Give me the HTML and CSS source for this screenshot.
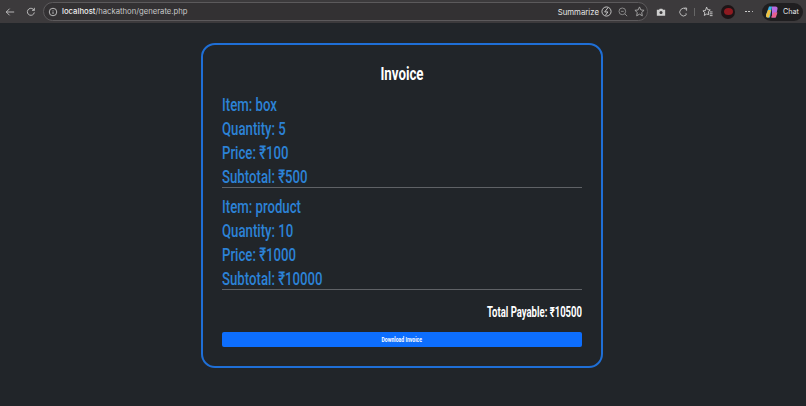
FILE: index.html
```html
<!DOCTYPE html>
<html lang="en">
<head>
<meta charset="utf-8">
<title>Invoice</title>
<link rel="stylesheet" href="styles.css">
</head>
<body>
<header class="chrome">
  <svg class="ic ic-back" viewBox="0 0 12 12"><path d="M11 6H1.500M5.500 2L1.500 6l4 4"/></svg>
  <svg class="ic ic-reload" viewBox="0 0 12 12"><path d="M10 6.500A4.200 4.200 0 1 1 8.600 2.600L10 4M10 1v3H7.200"/></svg>
  <div class="omnibox">
    <svg class="ic ic-info" viewBox="0 0 12 12"><circle cx="6" cy="6" r="4.500"/><path d="M6 5.400v3M6 3.600v.8"/></svg>
    <span class="url"><b>localhost</b>/hackathon/generate.php</span>
    <span class="summarize">Summarize</span>
    <svg class="ic ic-sum" viewBox="0 0 12 12"><circle cx="6" cy="6" r="5"/><path d="M7.500 2L4 6.500h3.500L5 10"/></svg>
    <svg class="ic ic-zoom" viewBox="0 0 12 12"><circle cx="5.200" cy="5.200" r="4"/><path d="M8.200 8.200L11 11M3.500 5.200h3.400"/></svg>
    <svg class="ic ic-star" viewBox="0 0 12 12"><path d="M6 1l1.500 3.300 3.500.4-2.600 2.400.7 3.600L6 8.900l-3.100 1.800.7-3.600L1 4.700l3.500-.4z"/></svg>
  </div>
  <svg class="ic ic-cam" viewBox="0 0 12 12"><path class="solid" d="M1 3.200h2.600L4.500 2h3l.9 1.200H11V10.500H1z"/><circle class="hole" cx="6" cy="6.500" r="1.800"/></svg>
  <svg class="ic ic-ext" viewBox="0 0 12 12"><path d="M9.500 2.500A4.600 4.600 0 1 0 9.500 9.800A2 2 0 0 0 9.500 7.500M7.500 1.200h2.800v3.300"/></svg>
  <span class="divider"></span>
  <svg class="ic ic-fav" viewBox="0 0 12 12"><path d="M5 1.200l1.200 2.800 2.800.3-2.100 2 .6 3L5 8.800l-2.500 1.500.6-3-2.100-2 2.800-.3zM8.500 6.500H11.500M8.500 8.500H11.500M8.500 10.500H11.500"/></svg>
  <span class="avatar"><span class="avatar-dot"></span></span>
  <span class="more"><i class="dot"></i><i class="dot"></i><i class="dot"></i></span>
  <span class="chat">
    <svg class="copilot" viewBox="0 0 14 14"><path fill="#3fb4e8" d="M4 1.500h3L5 12.500H2.500C1 12.500.8 11 1.200 9.500z"/><path fill="#f0c040" d="M1.200 9.500L3 5h3l-2 7.500H2.500C1 12.500.8 11 1.200 9.500z"/><path fill="#b66ae0" d="M7 1.500h3.500c1.500 0 2.400 1 2 2.500L10.500 12.500H7z"/><path fill="#e8608c" d="M8.500 7.500h4L11 12c-.2.500-.8.500-1.500.500H6z"/></svg>
    <span class="chat-label">Chat</span>
  </span>
</header>
<main class="page">
  <section class="card">
    <h1 class="title">Invoice</h1>
    <div class="item">
      <p class="line">Item: box</p>
      <p class="line">Quantity: 5</p>
      <p class="line">Price: ₹100</p>
      <p class="line">Subtotal: ₹500</p>
    </div>
    <hr class="rule">
    <div class="item">
      <p class="line">Item: product</p>
      <p class="line">Quantity: 10</p>
      <p class="line">Price: ₹1000</p>
      <p class="line">Subtotal: ₹10000</p>
    </div>
    <hr class="rule">
    <p class="total">Total Payable: ₹10500</p>
    <button class="download" type="button"><span class="download-label">Download Invoice</span></button>
  </section>
</main>
</body>
</html>
```
FILE: styles.css
```css
* { box-sizing: border-box; }
html, body { margin: 0; height: 100%; }
body {
  width: 806px;
  height: 406px;
  overflow: hidden;
  background: #212529;
  font-family: "Roboto", "Liberation Sans", sans-serif;
  display: flex;
  flex-direction: column;
}
.chrome {
  height: 23px;
  flex: none;
  background: #3c3a3c;
  display: flex;
  align-items: center;
  font-family: "Inter", "Liberation Sans", sans-serif;
  color: #e8e8e8;
}
.ic { width: 10px; height: 10px; fill: none; stroke: #cfcfcf; stroke-width: 1; flex: none; }
.ic-back { margin-left: 5px; }
.ic-reload { margin-left: 11px; }
.omnibox {
  margin-left: 7px;
  width: 605px;
  height: 19px;
  border: 1px solid #5c5a5c;
  border-radius: 10px;
  background: #333133;
  display: flex;
  align-items: center;
  padding-left: 4px;
  font-size: 7.700px;
}
.url { margin-left: 4px; color: #c8c8c8; flex: 1; white-space: nowrap; }
.url b { color: #eee; font-weight: 500; }
.summarize { color: #e6e6e6; font-size: 7.800px; }
.ic-sum { margin-left: 2px; width: 11px; height: 11px; }
.ic-zoom { margin-left: 6px; stroke: #999; }
.ic-star { margin-left: 6px; margin-right: 2px; width: 11px; height: 11px; stroke: #aaa; }
.ic-cam { margin-left: 8px; }
.ic-cam .solid { fill: #cfcfcf; stroke: none; }
.ic-cam .hole { fill: #3c3a3c; stroke: none; }
.ic-ext { margin-left: 12px; }
.divider { width: 1px; height: 8px; background: #666; margin-left: 6px; flex: none; }
.ic-fav { margin-left: 7px; width: 11px; height: 11px; }
.avatar { width: 14px; height: 14px; margin-left: 8px; border-radius: 50%; background: #1d1416; display: flex; align-items: center; justify-content: center; flex: none; }
.avatar-dot { width: 9px; height: 7px; border-radius: 50%; background: #8e1a20; }
.more { margin-left: 10px; width: 8px; display: flex; justify-content: space-between; flex: none; }
.dot { width: 1.500px; height: 1.500px; border-radius: 50%; background: #e0e0e0; }
.chat { margin-left: 9px; width: 41px; height: 18px; background: #1f1e20; border-radius: 9px; display: flex; align-items: center; padding-left: 3px; flex: none; }
.copilot { width: 14px; height: 14px; flex: none; }
.chat-label { margin-left: 4px; font-size: 7.200px; color: #e8e8e8; }
.page { flex: 1; display: flex; justify-content: center; align-items: flex-start; padding-top: 20px; padding-right: 2px; }
.card {
  width: 402px;
  height: 325px;
  border: 2px solid #1f6fd6;
  border-radius: 14px;
  padding: 17px 19px 0;
  display: flex;
  flex-direction: column;
}
.title { margin: 0 0 7px; height: 24px; line-height: 24px; font-size: 19px; font-weight: 700; color: #fff; text-align: center; transform: scaleX(.7); }
.item { display: flex; flex-direction: column; }
.line { margin: 0; height: 24px; line-height: 24px; font-size: 19px; font-weight: 500; color: #2c82d6; white-space: nowrap; transform: scaleX(.695); transform-origin: left center; }
.rule { margin: -2px 0 7px; border: 0; border-top: 1px solid #5f6266; height: 1px; flex: none; }
.total { margin: 3px 0 0; height: 24px; line-height: 24px; font-size: 14px; font-weight: 700; color: #fff; text-align: right; transform: scaleX(.68); transform-origin: right center; }
.download { margin-top: 8px; height: 15px; padding: 0; border: 0; border-radius: 2px; background: #0d6efd; color: #fff; font-family: inherit; font-size: 7.500px; font-weight: 700; }
.download-label { display: inline-block; transform: scaleX(.68); }
```
